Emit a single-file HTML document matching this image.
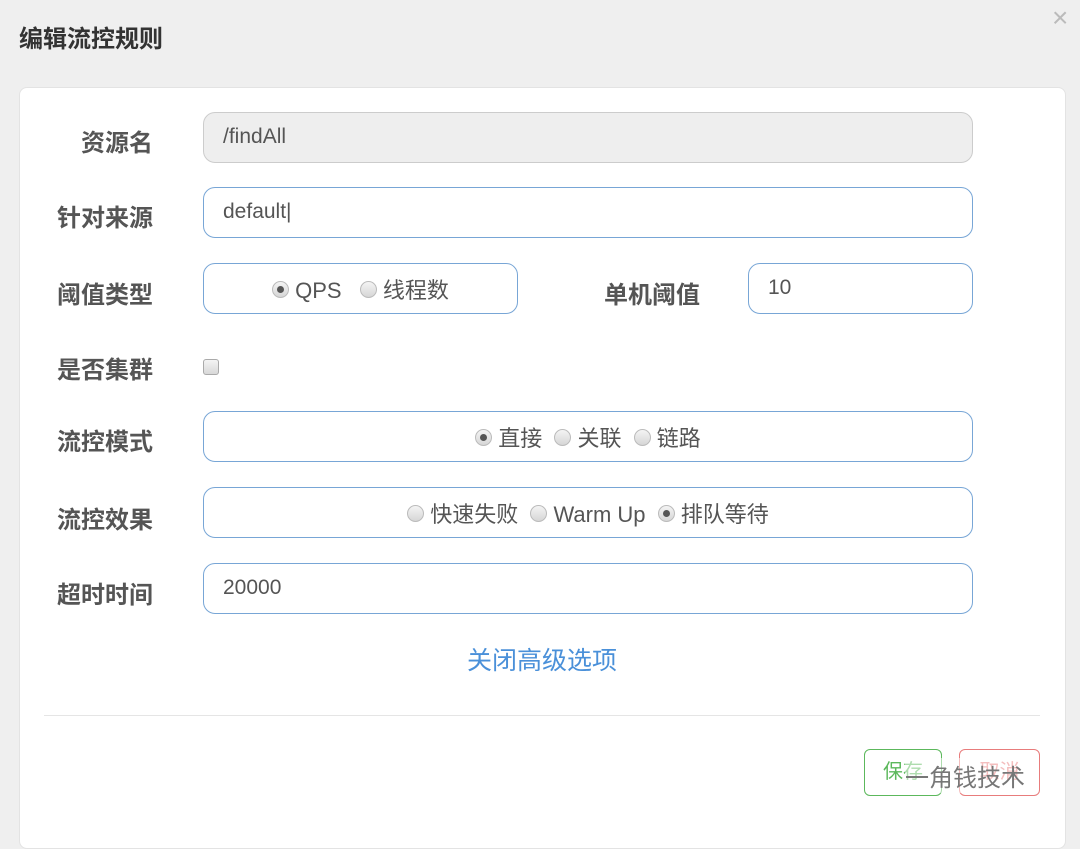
<!DOCTYPE html><html><head><meta charset="utf-8"><style>
body{margin:0;width:1080px;height:820px;background:#efefef;position:relative;overflow:hidden;font-family:"Liberation Sans","Noto Sans CJK SC",sans-serif;}
.a{position:absolute}
.title{left:19px;top:19px;font-size:24px;font-weight:bold;color:#333}
.x{left:1052px;top:2px;font-size:28px;color:#bbb}
.panel{left:19px;top:87px;width:1045px;height:760px;background:#fff;border:1px solid #e3e3e3;border-radius:8px}
.lab{font-size:24px;font-weight:bold;color:#555;width:130px;text-align:right;left:23px;margin-top:-3px}
.inp{border:1.5px solid #78a6d6;border-radius:12px;box-sizing:border-box;height:51px;font-size:21px;color:#555;padding-left:19px;line-height:48px}
.r{display:inline-block;width:15px;height:15px;border-radius:50%;background:linear-gradient(#f4f4f4,#d6d6d6);border:1px solid #bbb;vertical-align:0px;margin-right:6px;position:relative}
.r.on::after{content:"";position:absolute;left:4px;top:4px;width:7px;height:7px;border-radius:50%;background:#555}
.c{text-align:center;padding:3px 0 0;font-size:22px}
</style></head><body>
<div class="a title">编辑流控规则</div>
<div class="a x">×</div>
<div class="a panel"></div>
<div class="a lab" style="top:126px">资源名</div>
<div class="a inp" style="left:203px;top:112px;width:770px;background:#eee;border-color:#ccc">/findAll</div>
<div class="a lab" style="top:201px">针对来源</div>
<div class="a inp" style="left:203px;top:187px;width:770px">default|</div>
<div class="a lab" style="top:278px">阈值类型</div>
<div class="a inp c" style="left:203px;top:263px;width:315px"><span class="r on"></span>QPS&nbsp;&nbsp;&nbsp;<span class="r"></span>线程数</div>
<div class="a lab" style="top:278px;left:570px">单机阈值</div>
<div class="a inp" style="left:748px;top:263px;width:225px">10</div>
<div class="a lab" style="top:353px">是否集群</div>
<div class="a" style="left:203px;top:359px;width:14px;height:14px;border:1px solid #aaa;border-radius:3px;background:linear-gradient(#f4f4f4,#d8d8d8)"></div>
<div class="a lab" style="top:425px">流控模式</div>
<div class="a inp c" style="left:203px;top:411px;width:770px"><span class="r on"></span>直接&nbsp;&nbsp;<span class="r"></span>关联&nbsp;&nbsp;<span class="r"></span>链路</div>
<div class="a lab" style="top:503px">流控效果</div>
<div class="a inp c" style="left:203px;top:487px;width:770px"><span class="r"></span>快速失败&nbsp;&nbsp;<span class="r"></span>Warm Up&nbsp;&nbsp;<span class="r on"></span>排队等待</div>
<div class="a lab" style="top:578px">超时时间</div>
<div class="a inp" style="left:203px;top:563px;width:770px">20000</div>
<div class="a" style="left:467px;top:641px;font-size:25px;color:#4a90d9">关闭高级选项</div>
<div class="a" style="left:44px;top:715px;width:996px;height:1px;background:#e5e5e5"></div>
<div class="a" style="left:864px;top:749px;width:78px;height:47px;border:1.5px solid #5cb85c;border-radius:6px;box-sizing:border-box;color:#5cb85c;font-size:20px;text-align:center;line-height:44px">保存</div>
<div class="a" style="left:959px;top:749px;width:81px;height:47px;border:1.5px solid #e87c7c;border-radius:6px;box-sizing:border-box;color:#e87c7c;font-size:20px;text-align:center;line-height:44px">取消</div>
<div class="a" style="left:905px;top:758px;font-size:24px;color:#777;background:rgba(255,255,255,.5)">一角钱技术</div>
</body></html>
